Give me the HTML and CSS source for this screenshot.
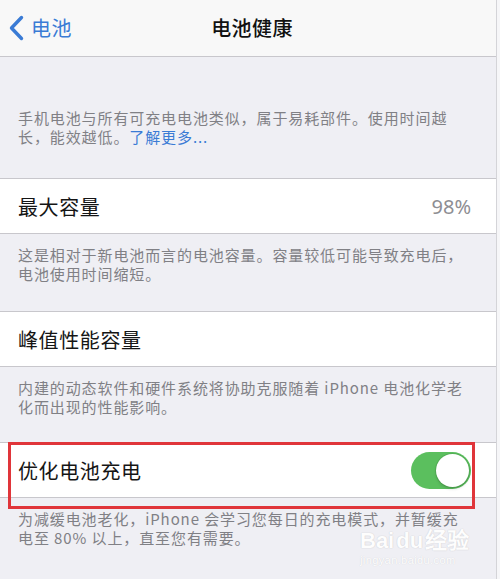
FILE: index.html
```html
<!DOCTYPE html>
<html lang="zh-CN">
  <head>
    <meta charset="UTF-8" />
    <meta name="viewport" content="width=device-width, initial-scale=1.0" />
    <title>电池健康</title>
    <link rel="stylesheet" href="styles.css">
  </head>
  <body>
    <div class="page">
      <!-- Navigation Bar -->
      <header class="nav">
        <a class="back" href="#">
          <svg class="chevron" width="16" height="26" viewBox="0 0 16 26">
            <path d="M13.5 2.5 L3.5 13 L13.5 23.5" />
          </svg>
          电池
        </a>
        <h1 class="nav-title">电池健康</h1>
        <span></span>
      </header>

      <p class="footnote intro">
        手机电池与所有可充电电池类似，属于易耗部件。使用时间越<br />长，能效越低。<a class="link" href="#">了解更多...</a>
      </p>

      <!-- Maximum Capacity -->
      <div class="cell">
        <span class="cell-title">最大容量</span>
        <span class="cell-value">98%</span>
      </div>
      <p class="footnote desc-1">
        这是相对于新电池而言的电池容量。容量较低可能导致充电后，<br />电池使用时间缩短。
      </p>

      <!-- Peak Performance -->
      <div class="cell">
        <span class="cell-title">峰值性能容量</span>
      </div>
      <p class="footnote desc-2">
        内建的动态软件和硬件系统将协助克服随着 iPhone 电池化学老<br />化而出现的性能影响。
      </p>

      <!-- Optimized Charging -->
      <div class="cell">
        <span class="cell-title">优化电池充电</span>
        <span class="switch on"><span class="knob"></span></span>
      </div>
      <p class="footnote desc-3">
        为减缓电池老化，iPhone 会学习您每日的充电模式，并暂缓充<br />电至 80% 以上，直至您有需要。
      </p>

      <!-- Annotation box -->
      <div class="highlight"></div>

      <!-- Watermark -->
      <div class="watermark">
        <span class="wm-logo">Bai<span class="wm-du">du</span>经验</span>
        <span class="wm-url">jingyan.baidu.com</span>
      </div>
    </div>
  </body>
</html>
```

FILE: styles.css
```css
/* Global Styles */
* {
  margin: 0;
  padding: 0;
  box-sizing: border-box;
}

body {
  font-family: "Noto Sans CJK SC", "Noto Sans", sans-serif;
  background: #f6f6f8;
  width: 500px;
  height: 579px;
  overflow: hidden;
}

/* Page */
.page {
  position: relative;
  width: 497px;
  height: 579px;
  background: #efeff4;
  border-right: 1px solid #d4d4d8;
}

/* Navigation Bar */
.nav {
  display: grid;
  grid-template-columns: 1fr auto 1fr;
  align-items: center;
  height: 57px;
  padding: 0 0 1px 8px;
  background: #f8f8f8;
  border-bottom: 1px solid #c8c7cc;
}

.back {
  display: flex;
  align-items: center;
  gap: 7px;
  color: #3a7bd5;
  font-size: 20px;
  text-decoration: none;
  letter-spacing: 0.5px;
}

.chevron path {
  fill: none;
  stroke: #3a7bd5;
  stroke-width: 3.4;
  stroke-linecap: round;
  stroke-linejoin: round;
}

.nav-title {
  font-size: 20px;
  font-weight: 500;
  color: #111;
  letter-spacing: 0.4px;
}

/* Footnotes */
.footnote {
  width: fit-content;
  color: #808085;
  font-size: 15px;
  line-height: 19px;
  letter-spacing: 0.9px;
  padding: 11px 18px 0;
}

.intro {
  padding-top: 51px;
  padding-bottom: 32px;
}

.desc-1 {
  padding-bottom: 28px;
}

.desc-2 {
  padding-bottom: 26px;
}

.link {
  color: #3a7bd5;
  text-decoration: none;
}

/* Cells */
.cell {
  display: flex;
  align-items: center;
  justify-content: space-between;
  height: 56px;
  padding: 0 25px 0 18px;
  background: #fff;
  border-top: 1px solid #c8c7cc;
  border-bottom: 1px solid #c8c7cc;
}

.cell-title {
  font-size: 20px;
  color: #151515;
  letter-spacing: 0.6px;
}

.cell-value {
  font-size: 20px;
  color: #8e8e93;
  font-family: "Noto Sans", sans-serif;
}

/* Toggle Switch */
.switch {
  display: flex;
  align-items: center;
  justify-content: flex-end;
  width: 60px;
  height: 37px;
  padding: 2px;
  border-radius: 19px;
  background: #5bbf5e;
}

.knob {
  width: 33px;
  height: 33px;
  border-radius: 50%;
  background: #fff;
  box-shadow: 0 0 0 1px rgba(0, 0, 0, 0.08), 0 2px 3px rgba(0, 0, 0, 0.15);
}

/* Red annotation box */
.highlight {
  position: absolute;
  left: 8px;
  top: 442px;
  width: 467px;
  height: 67px;
  border: 3px solid #e0353a;
}

/* Watermark */
.watermark {
  position: absolute;
  left: 360px;
  top: 529px;
  display: flex;
  flex-direction: column;
  align-items: flex-start;
  color: #fff;
  pointer-events: none;
}

.wm-logo {
  font-family: "Liberation Sans", sans-serif;
  font-size: 22px;
  font-weight: bold;
  line-height: 24px;
  text-shadow: 0 0 1px rgba(0, 0, 0, 0.16), 0 0 2px rgba(0, 0, 0, 0.06);
  opacity: 0.9;
}

.wm-du {
  margin: 0 2px;
}

.wm-url {
  font-family: "Liberation Sans", sans-serif;
  font-size: 11px;
  line-height: 14px;
  letter-spacing: 0.4px;
  text-shadow: 0 0 1px rgba(0, 0, 0, 0.16);
  opacity: 0.9;
}
```
